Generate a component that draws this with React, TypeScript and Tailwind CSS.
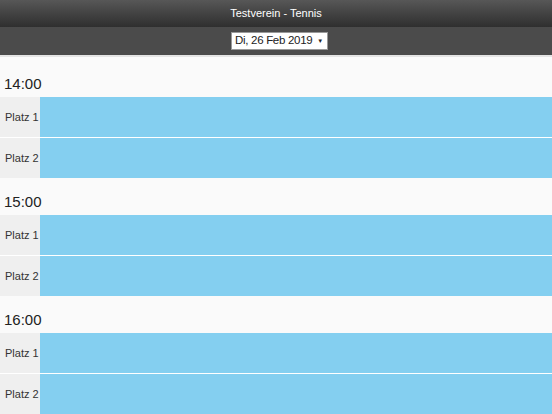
const hours = ["14:00", "15:00", "16:00"];
const courts = ["Platz 1", "Platz 2"];

const CourtRow = ({ name }: { name: string }) => (
  <div className="flex h-[40px]">
    <div className="flex w-[40px] shrink-0 items-center whitespace-nowrap bg-[#efefef] pl-[5px] text-[11px] text-[#333]">
      {name}
    </div>
    <div className="flex-1 bg-[#84cff0]" />
  </div>
);

export default function App() {
  return (
    <div className="h-[414px] w-[552px] overflow-hidden bg-[#fafafa] font-['Liberation_Sans',Arial,sans-serif]">
      <header className="flex h-[27px] items-center justify-center bg-gradient-to-b from-[#575757] to-[#2f2f2f] text-[11px] text-white">
        Testverein - Tennis
      </header>
      <div className="flex h-[28px] items-center justify-center bg-[#4b4b4b]">
        <div className="ml-[7px] flex h-[18px] w-[97px] shrink-0 items-center justify-between whitespace-nowrap border border-[#999] bg-white pl-[3px] pr-[4px] text-[11.5px] tracking-[-0.3px] text-[#222]">
          <span>Di, 26 Feb 2019</span>
          <span className="text-[6px]">▼</span>
        </div>
      </div>
      <div className="h-[2px] bg-[#e4e4e4]" />
      <main className="pt-[3px]">
        {hours.map((h) => (
          <section key={h}>
            <div className="flex h-[37px] items-end pb-[2px] pl-[4px] text-[15px] text-[#222]">{h}</div>
            <div className="flex flex-col gap-px bg-white">
              {courts.map((c) => (
                <CourtRow key={c} name={c} />
              ))}
            </div>
          </section>
        ))}
      </main>
    </div>
  );
}
